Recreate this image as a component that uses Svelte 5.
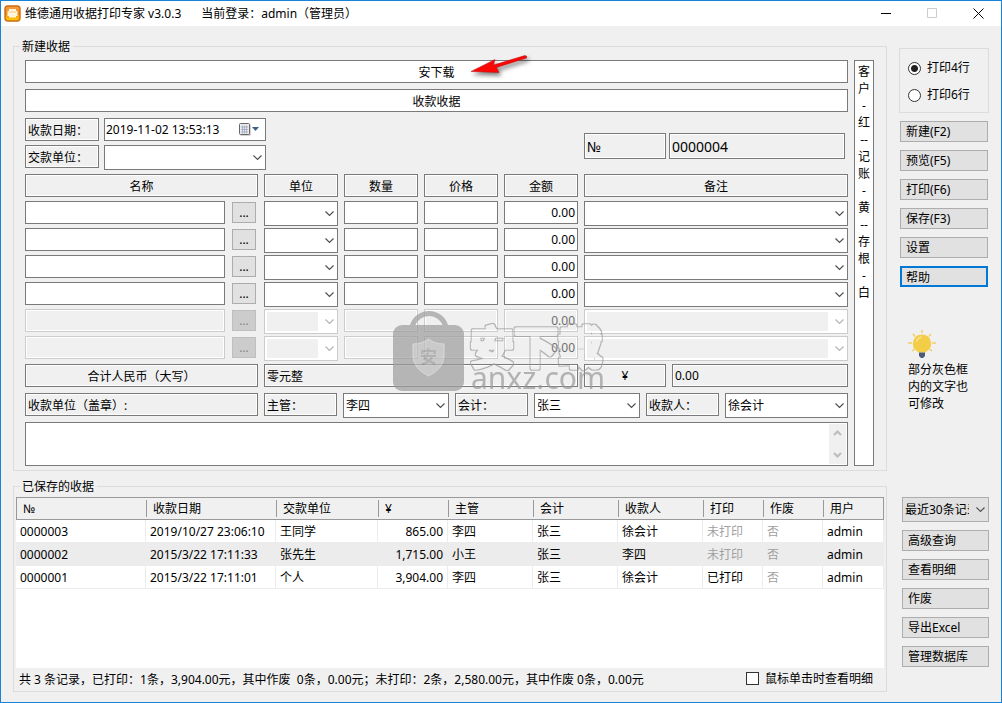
<script>
	let heads = ['名称', '单位', '数量', '价格', '金额', '备注'];
	let lineCount = $state(4);
	let showDetail = $state(false);
	let copies = '客\n户\n-\n红\n--\n记\n账\n-\n黄\n--\n存\n根\n-\n白';

	let tools = ['新建(F2)', '预览(F5)', '打印(F6)', '保存(F3)', '设置', '帮助'];
	let actions = ['高级查询', '查看明细', '作废', '导出Excel', '管理数据库'];

	let columns = [
		{ name: '№', width: 130 },
		{ name: '收款日期', width: 130 },
		{ name: '交款单位', width: 102 },
		{ name: '¥', width: 70 },
		{ name: '主管', width: 85 },
		{ name: '会计', width: 85 },
		{ name: '收款人', width: 85 },
		{ name: '打印', width: 60 },
		{ name: '作废', width: 60 },
		{ name: '用户', width: 61 }
	];
	let receipts = [
		['0000003', '2019/10/27 23:06:10', '王同学', '865.00', '李四', '张三', '徐会计', '未打印', '否', 'admin'],
		['0000002', '2015/3/22 17:11:33', '张先生', '1,715.00', '小王', '张三', '李四', '未打印', '否', 'admin'],
		['0000001', '2015/3/22 17:11:01', '个人', '3,904.00', '李四', '张三', '徐会计', '已打印', '否', 'admin']
	];
	let total = columns.reduce((sum, c) => sum + c.width, 0);
</script>

{#snippet combo(label, value = '', disabled = false)}
	<div class="combo" class:off={disabled}>
		<select aria-label={label} {disabled}>
			<option>{value}</option>
		</select>
		<svg width="11" height="7" viewBox="0 0 11 7"><path d="M1.500 1.500 L5.500 5.500 L9.500 1.500" /></svg>
	</div>
{/snippet}

<div class="window" lang="zh-CN">
	<header>
		<svg class="logo" width="17" height="17" viewBox="0 0 17 17">
			<defs>
				<linearGradient id="gold" x1="0" y1="0" x2="0" y2="1">
					<stop offset="0" stop-color="#f3a24a" />
					<stop offset="0.5" stop-color="#f08a1c" />
					<stop offset="1" stop-color="#ffd800" />
				</linearGradient>
			</defs>
			<rect x="1" y="1" width="15" height="15" rx="3" fill="url(#gold)" stroke="#cf6a10" stroke-width="1.4" />
			<path d="M5 4h7v2h1.500v5h-1.500v1.500h-7v-1.500h-1.500v-5h1.500z" fill="#fff6dc" />
			<path d="M5 7h7" stroke="#f5c888" />
		</svg>
		<h1>维德通用收据打印专家 v3.0.3</h1>
		<span class="login">当前登录：admin（管理员）</span>
		<div class="caption">
			<button aria-label="最小化"><svg width="11" height="11" viewBox="0 0 11 11"><path d="M0 5.500h10" /></svg></button>
			<button aria-label="最大化" disabled><svg width="11" height="11" viewBox="0 0 11 11"><path d="M.5.5h9v9h-9z" /></svg></button>
			<button aria-label="关闭"><svg width="11" height="11" viewBox="0 0 11 11"><path d="M.5.5l10 10M10.500.5l-10 10" /></svg></button>
		</div>
	</header>

	<main>
		<fieldset class="editor">
			<legend>新建收据</legend>
			<div class="form">
				<div class="titles">
					<input class="center" aria-label="公司名称" value="安下载" />
					<input class="center" aria-label="收据标题" value="收款收据" />
				</div>

				<div class="meta">
					<div class="who">
						<input class="gray" aria-label="收款日期标题" value="收款日期：" />
						<div class="date">
							<input aria-label="收款日期" value="2019-11-02 13:53:13" />
							<button aria-label="选择日期">
								<svg width="21" height="13" viewBox="0 0 21 13">
									<rect x="1.500" y="1.500" width="10" height="11" fill="#aaa" />
									<rect x=".5" y=".5" width="10" height="11" rx="1" fill="#e8ebf2" stroke="#6e6462" />
									<path d="M2 4h7M2 6.500h7M2 9h7M3.500 2.500v8M5.500 2.500v8M7.500 2.500v8" stroke="#9aa3b8" stroke-width=".7" />
									<path d="M13 4h7l-3.500 4z" fill="#3b6186" />
								</svg>
							</button>
						</div>
						<input class="gray" aria-label="交款单位标题" value="交款单位：" />
						{@render combo('交款单位')}
					</div>
					<div class="number">
						<input class="gray" aria-label="编号标题" value="№" />
						<input class="gray" aria-label="编号" value="0000004" />
					</div>
				</div>

				<div class="line">
					{#each heads as head}
						<input class="gray center" aria-label={head + '标题'} value={head} />
					{/each}
				</div>

				<div class="items">
					{#each Array(6) as _, i}
						{@const off = i >= lineCount}
						<div class="line">
							<div class="name">
								<input aria-label="名称" disabled={off} />
								<button class="btn" aria-label="选择名称" disabled={off}>...</button>
							</div>
							{@render combo('单位', '', off)}
							<input aria-label="数量" disabled={off} />
							<input aria-label="价格" disabled={off} />
							<input class="right" aria-label="金额" value="0.00" disabled={off} />
							{@render combo('备注', '', off)}
						</div>
					{/each}
				</div>

				<div class="line sum">
					<input class="gray center" aria-label="合计标题" value="合计人民币（大写）" />
					<input class="gray words" aria-label="大写金额" value="零元整" />
					<div class="amount">
						<input class="gray center" aria-label="货币符号" value="¥" />
						<input class="gray" aria-label="合计金额" value="0.00" />
					</div>
				</div>

				<div class="line">
					<input class="gray" aria-label="收款单位标题" value="收款单位（盖章）:" />
					<div class="signers">
						<input class="gray" aria-label="主管标题" value="主管：" />
						{@render combo('主管', '李四')}
						<input class="gray" aria-label="会计标题" value="会计：" />
						{@render combo('会计', '张三')}
						<input class="gray" aria-label="收款人标题" value="收款人：" />
						{@render combo('收款人', '徐会计')}
					</div>
				</div>

				<div class="memo">
					<textarea aria-label="附注"></textarea>
					<div class="scroll">
						<svg width="9" height="6" viewBox="0 0 9 6"><path d="M1 5 L4.500 1.500 L8 5" /></svg>
						<svg width="9" height="6" viewBox="0 0 9 6"><path d="M1 1 L4.500 4.500 L8 1" /></svg>
					</div>
				</div>
			</div>
			<textarea class="copies" aria-label="联次" value={copies}></textarea>

			<svg class="arrow" width="70" height="34" viewBox="0 0 70 34">
				<path d="M3 20.500 L27 8.500 L25.500 14 L57 4.500 Q59.500 5 58.500 7 L28.500 16.500 L31 21.500 Z" fill="#fe0505" stroke="#b01414" stroke-width=".5" />
			</svg>

			<svg class="watermark" width="230" height="100" viewBox="0 0 230 100">
				<!-- keeps only the rim round the fat letters -->
				<filter id="rim" x="-10%" y="-10%" width="120%" height="120%">
					<feMorphology in="SourceAlpha" operator="dilate" radius="1" result="fat" />
					<feFlood flood-color="#999" />
					<feComposite in2="fat" operator="in" />
					<feComposite in2="SourceAlpha" operator="out" />
				</filter>
				<path d="M19 17 C24 -1 48 -1 53 17" fill="none" stroke="#9d9d9d" stroke-width="5" />
				<rect x="0" y="15" width="71" height="66" rx="9" fill="#9d9d9d" />
				<path d="M35.500 29 Q42 34 51 34 V47 Q50 59 35.500 66 Q21 59 20 47 V34 Q29 34 35.500 29Z" fill="#bbb" stroke="#d0d0d0" />
				<text class="seal" x="27" y="53">安</text>
				<text class="brand" x="77" y="54" filter="url(#rim)">安下载</text>
				<text class="site" x="78" y="79">anxz.com</text>
			</svg>
		</fieldset>

		<aside class="tools">
			<div class="radios">
				<label><input type="radio" name="lines" value={4} bind:group={lineCount} />打印4行</label>
				<label><input type="radio" name="lines" value={6} bind:group={lineCount} />打印6行</label>
			</div>
			{#each tools as tool, i}
				<button class="btn" class:focused={i === 5}>{tool}</button>
			{/each}
			<div class="tip">
				<svg width="28" height="29" viewBox="0 0 28 29">
					<path d="M14 0v3M5 4l2 2.500M23 4l-2 2.500M0 13h4M24 13h4M4 21l2.500-2M24 21l-2.500-2" stroke="#f0cf60" stroke-width="1.500" />
					<path d="M14 4.500a9 9 0 0 0-5 16.500l1.500 1.500h7l1.500-1.500a9 9 0 0 0-5-16.500z" fill="#f3cd46" />
					<path d="M8.500 12q1-4 5-5" fill="none" stroke="#f9e394" stroke-width="1.500" />
					<path d="M11 22.500h6v3.500l-2 2h-2l-2-2z" fill="#4d5a7c" />
				</svg>
				<p>部分灰色框内的文字也可修改</p>
			</div>
		</aside>

		<fieldset class="saved">
			<legend>已保存的收据</legend>
			<div class="list">
				<table>
					<colgroup>
						{#each columns as c}
							<col style="width: {(c.width / total) * 100}%" />
						{/each}
					</colgroup>
					<thead>
						<tr>
							{#each columns as c}
								<th><span>{c.name}</span></th>
							{/each}
						</tr>
					</thead>
					<tbody>
						{#each receipts as r}
							<tr>
								{#each r as cell, i}
									<td class:money={i === 3} class:muted={cell === '未打印' || cell === '否'}>{cell}</td>
								{/each}
							</tr>
						{/each}
					</tbody>
				</table>
			</div>
			<div class="status">
				<span>共 3 条记录，已打印：1条，3,904.00元，其中作废&nbsp; 0条，0.00元；未打印：2条，2,580.00元，其中作废 0条，0.00元</span>
				<label><input type="checkbox" bind:checked={showDetail} />鼠标单击时查看明细</label>
			</div>
		</fieldset>

		<aside class="actions">
			{@render combo('范围', '最近30条记录')}
			{#each actions as action}
				<button class="btn">{action}</button>
			{/each}
		</aside>
	</main>
</div>

<style>
	:global(body) {
		margin: 0;
	}
	.window, .window * {
		box-sizing: border-box;
	}
	.window {
		display: flex;
		flex-direction: column;
		min-height: 100vh;
		border: 1px solid #1883d7;
		background: #f0f0f0;
		color: #000;
		font: 12px/16px "Noto Sans", "Noto Sans CJK SC", sans-serif;
	}
	input, select, textarea, button {
		font: inherit;
		color: inherit;
		margin: 0;
		border-radius: 0;
		outline: none;
	}

	/* title bar */
	header {
		display: flex;
		align-items: center;
		height: 25px;
		padding-left: 3px;
		background: #fff;
	}
	h1 {
		margin: 0 20px 0 4px;
		font-size: 12px;
		font-weight: normal;
	}
	.caption {
		display: flex;
		margin-left: auto;
	}
	.caption button {
		width: 46px;
		height: 25px;
		padding: 0;
		border: none;
		background: none;
	}
	.caption svg {
		display: block;
		margin: 0 auto;
		fill: none;
		stroke: #000;
	}
	.caption button:disabled svg {
		stroke: #ccc;
	}

	main {
		flex: 1;
		display: grid;
		grid-template-columns: minmax(0, 1fr) 91px;
		grid-template-rows: auto 1fr;
		gap: 7px 12px;
		padding: 12px 11px 10px 12px;
	}
	fieldset {
		min-width: 0;
		margin: 0;
		border: 1px solid #dcdcdc;
	}
	legend {
		height: 16px;
		padding: 0 3px 0 2px;
		line-height: 18px;
	}

	/* receipt form */
	.editor {
		position: relative;
		display: grid;
		grid-template-columns: minmax(0, 1fr) 20px;
		gap: 6px;
		padding: 6px 12px 4px 11px;
	}
	.editor legend {
		margin-left: -5px;
	}
	.form {
		display: flex;
		flex-direction: column;
		gap: 4px;
	}
	.form input {
		width: 100%;
		min-width: 0;
		height: 23px;
		padding: 0 2px;
		border: 1px solid #7a7a7a;
		background: #fff;
	}
	.form input.gray {
		background: #f0f0f0;
		box-shadow: inset 0 0 0 1px #fff;
	}
	.form input:disabled {
		border-color: #ccc;
		background: #f0f0f0;
		box-shadow: inset 0 0 0 1px #fff;
		color: #6d6d6d;
	}
	.form input.center {
		text-align: center;
	}
	.form input.right {
		text-align: right;
	}
	.titles {
		display: grid;
		gap: 6px;
	}
	.meta {
		display: flex;
		justify-content: space-between;
		align-items: flex-start;
		padding-top: 2px;
	}
	.who {
		display: grid;
		grid-template-columns: 74px 162px;
		gap: 4px 5px;
	}
	.date {
		display: flex;
		border: 1px solid #7a7a7a;
		background: #fff;
	}
	.date input {
		flex: 1;
		height: 21px;
		padding: 0 1px;
		border: none;
	}
	.date button {
		padding: 0 5px;
		border: none;
		background: none;
	}
	.date svg {
		display: block;
	}
	.number {
		display: grid;
		grid-template-columns: 82px 176px;
		gap: 3px;
		padding: 15px 3px 0 0;
	}
	.number input {
		height: 26px;
		font-size: 14px;
	}
	.line {
		display: grid;
		grid-template-columns: minmax(0, 233fr) repeat(4, 74px) minmax(0, 264fr);
		gap: 6px;
	}
	.items {
		display: grid;
		gap: 2px;
	}
	.name {
		display: flex;
		gap: 7px;
		padding-right: 2px;
	}
	.name .btn {
		flex: none;
		width: 24px;
		margin-top: 1px;
		padding: 0;
		text-align: center;
	}
	.sum {
		margin: -1px 0 2px;
	}
	.words {
		grid-column: 2 / 6;
	}
	.amount {
		display: grid;
		grid-template-columns: 82px 1fr;
		gap: 6px;
	}
	.signers {
		grid-column: 2 / 7;
		display: grid;
		grid-template-columns: 73px 106px 73px 106px 73px 1fr;
		gap: 6px;
	}

	.combo {
		position: relative;
		height: 25px;
	}
	.combo select {
		display: block;
		width: 100%;
		height: 25px;
		padding: 2px 19px 2px 2px;
		border: 1px solid #7a7a7a;
		background: #fff;
		appearance: none;
	}
	.combo svg {
		position: absolute;
		right: 3px;
		top: 9px;
		fill: none;
		stroke: #505050;
		stroke-width: 1.2;
		pointer-events: none;
	}
	.off select {
		border-color: #ccc;
		background: linear-gradient(#f0f0f0, #f0f0f0) content-box, #fff;
		opacity: 1;
	}
	.combo.off svg {
		stroke: #b5b5b5;
	}

	.memo {
		display: flex;
		height: 44px;
		padding: 1px;
		border: 1px solid #7a7a7a;
		background: #fff;
	}
	.memo textarea {
		flex: 1;
		padding: 0 1px;
		border: none;
		resize: none;
		overflow: hidden;
	}
	.scroll {
		display: flex;
		flex-direction: column;
		justify-content: space-between;
		align-items: center;
		width: 17px;
		padding: 6px 0;
		background: #f0f0f0;
	}
	.scroll svg {
		fill: none;
		stroke: #bcbcbc;
		stroke-width: 2;
	}
	.copies {
		width: 100%;
		padding: 2px 0;
		border: 1px solid #7a7a7a;
		background: #fff;
		line-height: 17px;
		text-align: center;
		resize: none;
		overflow: hidden;
	}

	/* overlays */
	.arrow {
		position: absolute;
		left: 454px;
		top: -3px;
		filter: drop-shadow(2px 3px 2px rgba(0, 0, 0, 0.5));
		pointer-events: none;
	}
	.watermark {
		position: absolute;
		left: 379px;
		top: 256px;
		opacity: 0.7;
		pointer-events: none;
	}
	.brand {
		font: bold 44px "Noto Sans CJK SC", sans-serif;
		stroke: #000;
		stroke-width: 3.5;
		stroke-linejoin: round;
	}
	.seal {
		font: bold 17px "Noto Sans CJK SC", sans-serif;
		fill: #999;
	}
	.site {
		font: 30px "Noto Sans", sans-serif;
		fill: #999;
	}

	/* side columns */
	.btn {
		height: 21px;
		padding: 1px 5px 0;
		border: 1px solid #adadad;
		background: #e1e1e1;
		line-height: 18px;
		text-align: left;
		white-space: nowrap;
	}
	.btn:disabled {
		border-color: #bfbfbf;
		background: #ccc;
		color: #888;
	}
	.btn.focused {
		border: 2px solid #0078d7;
		padding: 1px 4px 0;
	}
	.tools, .actions {
		display: flex;
		flex-direction: column;
		gap: 8px;
	}
	.tools {
		padding: 10px 2px 0 1px;
	}
	.radios {
		display: grid;
		gap: 11px;
		margin: 0 -1px;
		padding: 11px 8px 9px;
		border: 1px solid #dcdcdc;
	}
	label {
		display: flex;
		align-items: center;
		gap: 6px;
	}
	input[type="radio"], input[type="checkbox"] {
		width: 13px;
		height: 13px;
		border: 1px solid #333;
		background: #fff;
		appearance: none;
	}
	input[type="radio"] {
		border-radius: 50%;
	}
	input[type="radio"]:checked {
		background: radial-gradient(circle, #222 3px, #fff 4px);
	}
	input[type="checkbox"]:checked {
		background: #333;
		box-shadow: inset 0 0 0 2px #fff;
	}
	.tip {
		padding: 35px 8px 0;
	}
	.tip svg {
		display: block;
	}
	.tip p {
		width: 62px;
		margin: 2px 0 0;
		line-height: 17px;
	}
	.actions {
		padding: 19px 1px 0 3px;
	}
	.actions .combo select {
		border-color: #adadad;
		background: #e1e1e1;
	}

	/* saved receipts */
	.saved {
		display: flex;
		flex-direction: column;
		padding: 3px 2px 0;
	}
	.saved legend {
		margin-left: 4px;
	}
	.list {
		flex: 1;
		background: #fff;
	}
	table {
		width: 100%;
		table-layout: fixed;
		border-collapse: separate;
		border-spacing: 0;
		white-space: nowrap;
	}
	th {
		height: 22px;
		padding: 2px 0;
		border: solid #999;
		border-width: 1px 0;
		background: #f0f0f0;
		font-weight: normal;
		text-align: left;
	}
	th span {
		display: block;
		padding-left: 6px;
		border-left: 1px solid #999;
		line-height: 17px;
	}
	th:first-child {
		border-left-width: 1px;
	}
	th:first-child span {
		border-left: none;
	}
	th:last-child {
		border-right-width: 1px;
	}
	td {
		height: 23px;
		padding: 2px 4px 0;
		border: solid #ececec;
		border-width: 0 1px 1px 0;
	}
	tbody tr:nth-child(even) td {
		background: #ececec;
	}
	td.money {
		text-align: right;
	}
	td.muted {
		color: #a0a0a0;
	}
	.status {
		display: flex;
		justify-content: space-between;
		height: 23px;
		padding: 4px 11px 0 3px;
	}
	.status label {
		height: 13px;
	}
</style>
